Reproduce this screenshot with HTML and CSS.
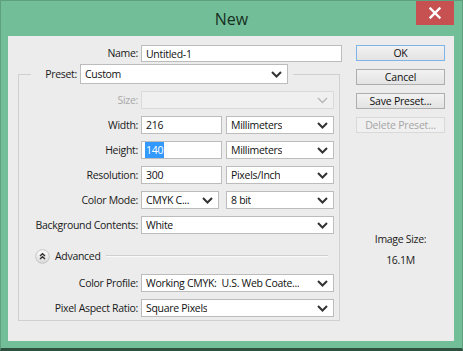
FILE: index.html
```html
<!DOCTYPE html>
<html>
<head>
<meta charset="utf-8">
<title>New</title>
<link rel="stylesheet" href="styles.css">
</head>
<body>
<div class="window">
  <div class="titlebar">
    <div class="title">New</div>
    <div class="close" aria-label="Close">
      <svg width="12" height="12" viewBox="0 0 12 12"><path d="M1.5 1.5 L10.5 10.5 M10.5 1.5 L1.5 10.5" stroke="#fff" stroke-width="2.4" stroke-linecap="square"/></svg>
    </div>
  </div>
  <div class="client">
    <div class="main">
      <div class="name-row">
        <span class="lbl">Name:</span>
        <div class="field text">Untitled-1</div>
      </div>
      <fieldset class="group">
        <legend class="preset">
          <span class="lbl">Preset:</span>
          <div class="field select preset-select"><span class="val">Custom</span><svg class="chev" width="11" height="7" viewBox="0 0 11 7"><path d="M1 1 L5.5 5.5 L10 1" fill="none" stroke="#333" stroke-width="2"/></svg></div>
        </legend>
        <div class="grid">
          <span class="lbl disabled">Size:</span>
          <div class="field select disabled-field"><span class="val"></span><svg class="chev" width="11" height="7" viewBox="0 0 11 7"><path d="M1 1 L5.5 5.5 L10 1" fill="none" stroke="#b4b4b4" stroke-width="1.3"/></svg></div>

          <span class="lbl">Width:</span>
          <div class="pair">
            <div class="field text num">216</div>
            <div class="field select unit"><span class="val">Millimeters</span><svg class="chev" width="11" height="7" viewBox="0 0 11 7"><path d="M1 1 L5.5 5.5 L10 1" fill="none" stroke="#333" stroke-width="2"/></svg></div>
          </div>

          <span class="lbl">Height:</span>
          <div class="pair">
            <div class="field text num"><span class="sel">140</span></div>
            <div class="field select unit"><span class="val">Millimeters</span><svg class="chev" width="11" height="7" viewBox="0 0 11 7"><path d="M1 1 L5.5 5.5 L10 1" fill="none" stroke="#333" stroke-width="2"/></svg></div>
          </div>

          <span class="lbl">Resolution:</span>
          <div class="pair">
            <div class="field text num">300</div>
            <div class="field select unit"><span class="val">Pixels/Inch</span><svg class="chev" width="11" height="7" viewBox="0 0 11 7"><path d="M1 1 L5.5 5.5 L10 1" fill="none" stroke="#333" stroke-width="2"/></svg></div>
          </div>

          <span class="lbl">Color Mode:</span>
          <div class="pair">
            <div class="field select mode"><span class="val">CMYK C...</span><svg class="chev" width="11" height="7" viewBox="0 0 11 7"><path d="M1 1 L5.5 5.5 L10 1" fill="none" stroke="#333" stroke-width="2"/></svg></div>
            <div class="field select unit"><span class="val">8 bit</span><svg class="chev" width="11" height="7" viewBox="0 0 11 7"><path d="M1 1 L5.5 5.5 L10 1" fill="none" stroke="#333" stroke-width="2"/></svg></div>
          </div>

          <span class="lbl">Background Contents:</span>
          <div class="field select"><span class="val">White</span><svg class="chev" width="11" height="7" viewBox="0 0 11 7"><path d="M1 1 L5.5 5.5 L10 1" fill="none" stroke="#333" stroke-width="2"/></svg></div>
        </div>

        <div class="advanced">
          <span class="adv-icon">
            <svg width="15" height="15" viewBox="0 0 15 15">
              <defs><linearGradient id="g" x1="0" y1="0" x2="0" y2="1"><stop offset="0" stop-color="#ffffff"/><stop offset="1" stop-color="#d8d8d8"/></linearGradient></defs>
              <circle cx="7.5" cy="7.5" r="6.8" fill="url(#g)" stroke="#c4c4c4" stroke-width="1"/>
              <path d="M5 7 L7.5 4.8 L10 7 M5 10 L7.5 7.8 L10 10" fill="none" stroke="#333" stroke-width="1.4"/>
            </svg>
          </span>
          <span class="adv-text">Advanced</span>
          <span class="adv-line"></span>
        </div>

        <div class="grid">
          <span class="lbl">Color Profile:</span>
          <div class="field select"><span class="val">Working CMYK:&nbsp; U.S. Web Coate...</span><svg class="chev" width="11" height="7" viewBox="0 0 11 7"><path d="M1 1 L5.5 5.5 L10 1" fill="none" stroke="#333" stroke-width="2"/></svg></div>

          <span class="lbl">Pixel Aspect Ratio:</span>
          <div class="field select"><span class="val">Square Pixels</span><svg class="chev" width="11" height="7" viewBox="0 0 11 7"><path d="M1 1 L5.5 5.5 L10 1" fill="none" stroke="#333" stroke-width="2"/></svg></div>
        </div>
      </fieldset>
    </div>

    <div class="side">
      <div class="btn default">OK</div>
      <div class="btn">Cancel</div>
      <div class="btn">Save Preset...</div>
      <div class="btn disabled-btn">Delete Preset...</div>
      <div class="imgsize">
        <div class="imgsize-label">Image Size:</div>
        <div class="imgsize-value">16.1M</div>
      </div>
    </div>
  </div>
</div>
</body>
</html>
```

FILE: styles.css
```css
* { box-sizing: border-box; }
html, body { margin: 0; padding: 0; }
body {
  width: 463px;
  height: 351px;
  overflow: hidden;
  font-family: "Open Sans", "Noto Sans", sans-serif;
  font-size: 10.5px;
  color: #1a1a1a;
  background: #72be98;
}
.window {
  width: 463px;
  height: 351px;
  background: #72be98;
  border: 1px solid #5f9f7f;
  border-bottom: 3px solid #2f4f3f;
  display: flex;
  flex-direction: column;
}
.titlebar {
  height: 35px;
  display: grid;
  grid-template-columns: 1fr auto 1fr;
  align-items: start;
}
.title {
  grid-column: 2;
  font-size: 16px;
  line-height: 20px;
  padding-top: 8px;
  color: #17301f;
}
.close {
  grid-column: 3;
  justify-self: end;
  width: 38px;
  height: 24px;
  margin-right: 8px;
  background: #c75050;
  display: flex;
  align-items: center;
  justify-content: center;
}
.close svg { display: block; }
.client {
  margin-left: 7px;
  width: 446px;
  height: 305px;
  background: #ececec;
  display: flex;
  padding-top: 9px;
}
.main {
  margin-left: 10px;
  width: 324px;
}
.lbl {
  text-align: right;
  white-space: nowrap;
  line-height: 18px;
  letter-spacing: -0.3px;
}
.lbl.disabled { color: #a9a9a9; }
.name-row {
  display: grid;
  grid-template-columns: 120px 201px;
  column-gap: 3px;
  height: 17px;
}
.name-row .lbl { line-height: 17px; }
.field {
  height: 18px;
  border: 1px solid #bcbcbc;
  background: #fff;
  padding: 0 4px;
  display: flex;
  align-items: center;
  white-space: nowrap;
  color: #111;
  letter-spacing: -0.3px;
  line-height: 16px;
}
.name-row .field { height: 17px; }
.select { justify-content: space-between; padding-right: 5px; }
.select .val { overflow: hidden; }
.chev { flex: none; display: block; }
.disabled-field { background: #f0f0f0; border-color: #dadada; }
.group {
  margin: 2px 0 0 0;
  padding: 0 5px 3px 0;
  width: 322px;
  border: 1px solid #d0d0d0;
  min-width: 0;
}
.preset {
  margin-left: 12px;
  padding: 0 5px 0 13px;
  display: flex;
  align-items: center;
  column-gap: 3px;
}
.preset .lbl { width: 33px; }
.preset-select { width: 208px; height: 20px; }
.grid {
  display: grid;
  grid-template-columns: 119px 193px;
  column-gap: 3px;
  row-gap: 7px;
  margin-top: 7px;
}
.pair {
  display: flex;
  justify-content: space-between;
}
.num { width: 81px; }
.unit { width: 108px; }
.mode { width: 78px; }
.sel {
  background: #3399ff;
  color: #fff;
  padding: 0 1px;
  margin-left: -1px;
}
.advanced {
  display: flex;
  align-items: center;
  height: 16px;
  margin-top: 14px;
  margin-bottom: 10px;
  padding-left: 16px;
}
.adv-icon { width: 15px; height: 15px; flex: none; }
.adv-icon svg { display: block; }
.adv-text { margin-left: 5px; letter-spacing: -0.3px; color: #1a1a1a; }
.adv-line {
  flex: 1;
  height: 2px;
  border-top: 1px solid #cfcfcf;
  border-bottom: 1px solid #fafafa;
  margin-left: 5px;
  margin-right: 6px;
}
.side {
  margin-left: 14px;
  width: 89px;
  display: flex;
  flex-direction: column;
  row-gap: 8px;
}
.btn {
  height: 16px;
  border: 1px solid #adadad;
  background: linear-gradient(#f2f2f2, #e3e3e3);
  text-align: center;
  line-height: 14px;
  letter-spacing: -0.2px;
  color: #111;
}
.btn.default { border-color: #7fb4e6; }
.disabled-btn { border-color: #d9d9d9; background: #f0f0f0; color: #a6a6a6; }
.imgsize {
  margin-top: 89px;
  text-align: center;
  color: #1a1a1a;
  letter-spacing: -0.3px;
}
.imgsize-label { line-height: 18px; }
.imgsize-value { line-height: 18px; margin-top: 3px; }
```
